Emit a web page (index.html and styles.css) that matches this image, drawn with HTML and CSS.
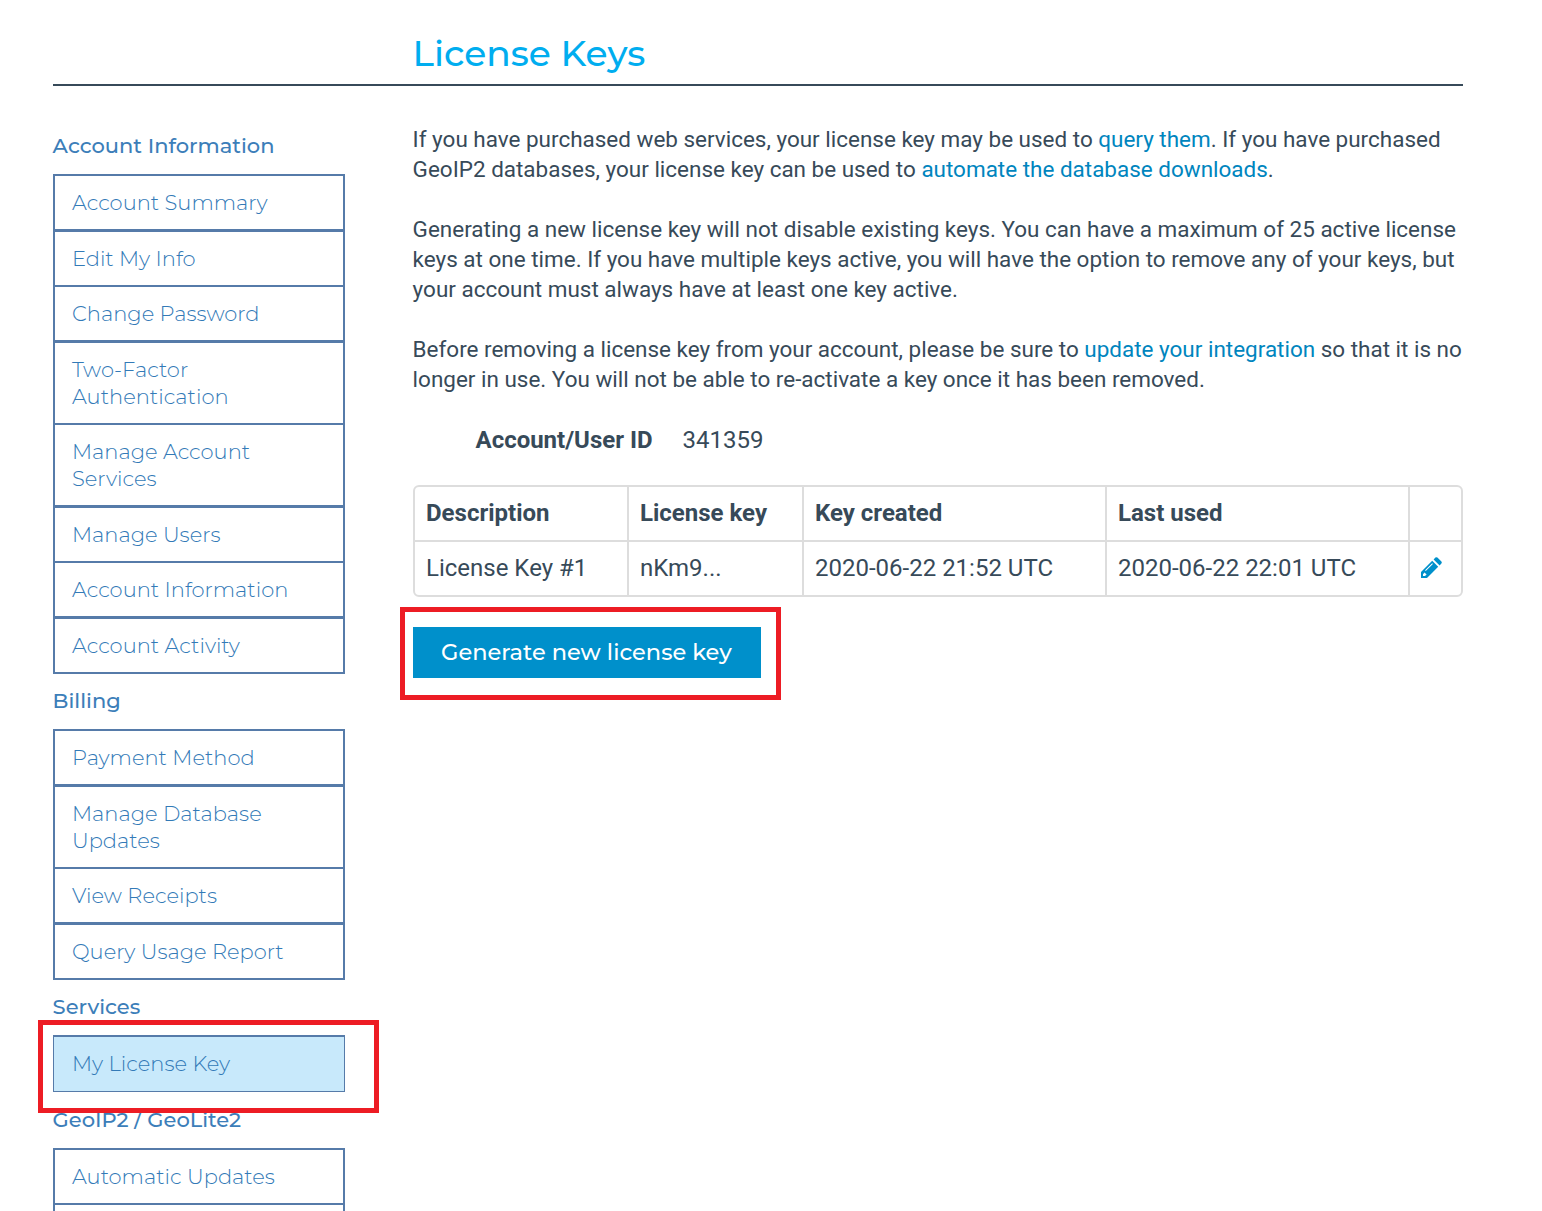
FILE: index.html
```html
<!DOCTYPE html>
<html lang="en">
<head>
<meta charset="utf-8">
<title>License Keys</title>
<link rel="stylesheet" href="styles.css">
</head>
<body>
<header class="page-header"><h1>License Keys</h1></header>
<div class="layout">
  <nav class="sidebar">
    <h2>Account Information</h2>
    <ul>
      <li><a>Account Summary</a></li>
      <li class="thick"><a>Edit My Info</a></li>
      <li><a>Change Password</a></li>
      <li class="thick"><a>Two-Factor<br>Authentication</a></li>
      <li><a>Manage Account<br>Services</a></li>
      <li class="thick"><a>Manage Users</a></li>
      <li><a>Account Information</a></li>
      <li class="thick"><a>Account Activity</a></li>
    </ul>
    <h2>Billing</h2>
    <ul>
      <li><a>Payment Method</a></li>
      <li class="thick"><a>Manage Database<br>Updates</a></li>
      <li><a>View Receipts</a></li>
      <li class="thick"><a>Query Usage Report</a></li>
    </ul>
    <h2>Services</h2>
    <ul class="current">
      <li><a>My License Key</a></li>
    </ul>
    <h2>GeoIP2 / GeoLite2</h2>
    <ul class="last">
      <li><a>Automatic Updates</a></li>
      <li class="empty"></li>
    </ul>
  </nav>
  <main>
    <p>If you have purchased web services, your license key may be used to <a>query them</a>. If you have purchased<br>GeoIP2 databases, your license key can be used to <a>automate the database downloads</a>.</p>
    <p>Generating a new license key will not disable existing keys. You can have a maximum of 25 active license<br>keys at one time. If you have multiple keys active, you will have the option to remove any of your keys, but<br>your account must always have at least one key active.</p>
    <p>Before removing a license key from your account, please be sure to <a>update your integration</a> so that it is no<br>longer in use. You will not be able to re-activate a key once it has been removed.</p>
    <dl class="account"><dt>Account/User ID</dt><dd>341359</dd></dl>
    <div class="keys">
      <div class="head">Description</div><div class="head">License key</div><div class="head">Key created</div><div class="head">Last used</div><div></div>
      <div>License Key #1</div><div>nKm9...</div><div>2020-06-22 21:52 UTC</div><div>2020-06-22 22:01 UTC</div>
      <div class="edit"><svg width="21" height="21" viewBox="0 0 21 21"><path fill="#0090cb" fill-rule="evenodd" d="M0 21V15L11.2 3.8L17.2 9.8L6 21ZM2 17.2V19H4L5.6 17.5L3.5 15.6ZM4.8 14L11.9 6.9L11.2 6.2L4.1 13.3ZM12.6 2.4L14.4.6Q15.4-.2 16.4.6L20.4 4.6Q21.2 5.6 20.4 6.6L18.6 8.4Z"/></svg></div>
    </div>
    <button class="generate">Generate new license key</button>
  </main>
</div>
<div class="mark mark-menu"></div>
<div class="mark mark-button"></div>
</body>
</html>
```
FILE: styles.css
```css
* { box-sizing: border-box; }
body {
  position: relative;
  height: 1211px;
  margin: 0;
  background: #fff;
  color: #374a59;
  font: 22.48px/30px Roboto, sans-serif;
}
h1, h2, .sidebar, .generate { font-family: Montserrat, Lato, sans-serif; }
.page-header {
  height: 86px;
  margin: 0 79px 0 53px;
  padding: 31px 0 0 359.5px;
  border-bottom: 2px solid #374a59;
}
h1 { margin: 0; color: #00adef; font-size: 36px; font-weight: 500; line-height: 44px; }
.layout { display: flex; gap: 68px; height: 1125px; padding: 38px 79px 0 53px; }
.sidebar { flex: none; width: 292px; padding-top: 8px; color: #337ab7; white-space: nowrap; }
.sidebar h2 {
  height: 42px;
  margin: 0 0 0 -.4px;
  color: #3c7eb9;
  font-size: 21px;
  font-weight: 500;
  line-height: 27px;
}
.sidebar ul {
  margin: 0 0 13px;
  padding: 0;
  list-style: none;
  border: solid #567ba9;
  border-width: 0 2px 2px;
  font-size: 21px;
  font-weight: 300;
  line-height: 27px;
}
.sidebar li { padding: 13px 17px; border-top: 2px solid #567ba9; }
.sidebar li.thick { border-top-width: 3px; }
.sidebar .current { margin-bottom: 14px; border-width: 0 1px 1px; background: #c8e9fb; }
.sidebar .current li { padding: 13px 18px 14px; }
.sidebar .last { margin-bottom: 0; border-bottom: 0; }
.sidebar li.empty { height: 8px; padding: 0; }
main { flex: none; width: 1050px; white-space: nowrap; }
main p { margin: 0 0 30px -.4px; }
main a { color: #0085be; }
.account { display: flex; gap: 30px; margin: 0; padding-left: 62.5px; font-size: 24px; line-height: 32px; }
.account dt { font-weight: 700; }
.account dd { margin: 0; }
.keys {
  display: grid;
  grid-template-columns: 212px 173px 301px 301px 51px;
  grid-auto-rows: 53px;
  gap: 2px;
  width: 1050px;
  margin-top: 29px;
  border: 2px solid #ddd;
  border-radius: 6px;
  background: #ddd;
  overflow: hidden;
  font-size: 24px;
  line-height: 53px;
}
.keys > div { padding-left: 11px; background: #fff; }
.keys .head { font-weight: 700; }
.keys .edit { display: flex; align-items: center; padding-bottom: 2px; }
.generate {
  display: block;
  width: 348px;
  height: 51px;
  margin-top: 30px;
  padding: 0 1px 2px 0;
  border: 0;
  background: #0090cb;
  color: #fff;
  font-size: 22.5px;
  font-weight: 500;
}
.mark { position: absolute; border: 5px solid #ed1c24; }
.mark-menu { left: 38px; top: 1020px; width: 341px; height: 93px; }
.mark-button { left: 400px; top: 607px; width: 381px; height: 93px; }
```
